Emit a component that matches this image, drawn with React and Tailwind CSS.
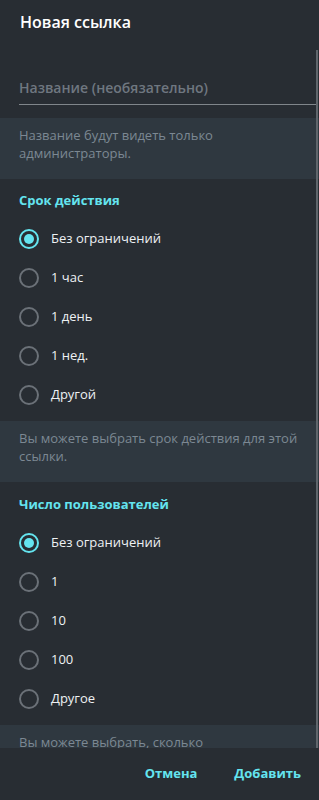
import React from 'react';

const Radio = ({ label, checked }) => (
  <div className="flex items-center h-[39px] pl-[19px]">
    {checked ? (
      <span className="w-[20px] h-[20px] rounded-full border-2 border-[#64e4ef] flex items-center justify-center">
        <span className="w-[10px] h-[10px] rounded-full bg-[#64e4ef]" />
      </span>
    ) : (
      <span className="w-[20px] h-[20px] rounded-full border-2 border-[#6b7178]" />
    )}
    <span className="ml-[12px] text-[13px] text-[#eef1f3]">{label}</span>
  </div>
);

const Info = ({ children, className = '' }) => (
  <div className={`bg-[#2f3840] px-[19px] text-[13px] leading-[18px] text-[#7c8893] ${className}`}>
    {children}
  </div>
);

export default function App() {
  return (
    <div className="w-[319px] h-[800px] bg-[#282d33] flex flex-col overflow-hidden" style={{ fontFamily: '"Open Sans", "Liberation Sans", sans-serif' }}>
      <div className="h-[50px] shrink-0 px-[20px] pt-[10px]">
        <h1 className="text-[16px] font-semibold text-white">Новая ссылка</h1>
      </div>

      <div className="relative flex-1 overflow-hidden">
        <div className="pl-[19px] pr-[2px] pt-[27px]">
          <div className="border-b border-[#80868b] pb-[6px] text-[14px] font-semibold text-[#6f7780]">
            Название (необязательно)
          </div>
        </div>

        <Info className="mt-[13px] pt-[8px] pb-[17px]">
          Название будут видеть только администраторы.
        </Info>

        <div className="px-[19px] pt-[12px] pb-[9px] text-[13px] font-bold text-[#64e4ef]">Срок действия</div>
        <Radio label="Без ограничений" checked />
        <Radio label="1 час" />
        <Radio label="1 день" />
        <Radio label="1 нед." />
        <Radio label="Другой" />

        <Info className="mt-[6px] pt-[8px] pb-[17px]">
          Вы можете выбрать срок действия для этой ссылки.
        </Info>

        <div className="px-[19px] pt-[13px] pb-[9px] text-[13px] font-bold text-[#64e4ef]">Число пользователей</div>
        <Radio label="Без ограничений" checked />
        <Radio label="1" />
        <Radio label="10" />
        <Radio label="100" />
        <Radio label="Другое" />

        <Info className="mt-[7px] pt-[8px] pb-[17px]">
          Вы можете выбрать, сколько пользователей смогут присоединиться по этой ссылке.
        </Info>

        <div className="absolute right-[1px] top-0 bottom-0 w-[2px] bg-[#60666c]" />
      </div>

      <div className="h-[52px] shrink-0 flex items-center justify-end gap-[37px] pr-[18px] text-[13px] font-bold text-[#64e4ef]">
        <span>Отмена</span>
        <span>Добавить</span>
      </div>
    </div>
  );
}
